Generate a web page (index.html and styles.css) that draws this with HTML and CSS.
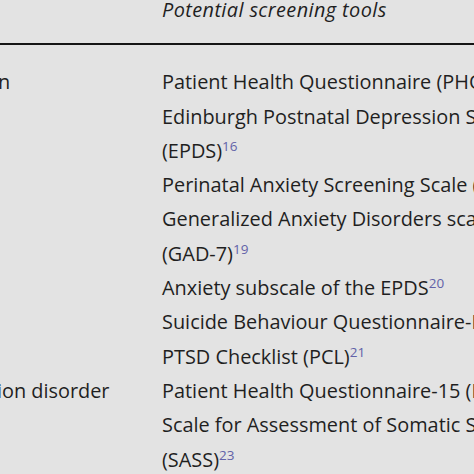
FILE: index.html
```html
<!DOCTYPE html>
<html lang="en">
<head>
<meta charset="utf-8">
<link rel="stylesheet" href="styles.css">
</head>
<body>
<div class="page">
  <table class="tools">
    <thead>
      <tr>
        <th class="cond"></th>
        <th class="tool">Potential screening tools</th>
      </tr>
    </thead>
    <tbody>
      <tr class="first">
        <td class="cond">Depression</td>
        <td class="tool">
          <p>Patient Health Questionnaire (PHQ-9)<sup>15</sup></p>
          <p>Edinburgh Postnatal Depression Scale<br>(EPDS)<sup>16</sup></p>
        </td>
      </tr>
      <tr>
        <td class="cond">Anxiety</td>
        <td class="tool">
          <p>Perinatal Anxiety Screening Scale (PASS)<sup>18</sup></p>
          <p>Generalized Anxiety Disorders scale<br>(GAD-7)<sup>19</sup></p>
          <p>Anxiety subscale of the EPDS<sup>20</sup></p>
        </td>
      </tr>
      <tr>
        <td class="cond">Suicide</td>
        <td class="tool"><p>Suicide Behaviour Questionnaire-Revised (SBQ-R)<sup>21</sup></p></td>
      </tr>
      <tr>
        <td class="cond">PTSD</td>
        <td class="tool"><p>PTSD Checklist (PCL)<sup>21</sup></p></td>
      </tr>
      <tr>
        <td class="cond">Somatization disorder</td>
        <td class="tool">
          <p>Patient Health Questionnaire-15 (PHQ-15)<sup>22</sup></p>
          <p>Scale for Assessment of Somatic Symptoms<br>(SASS)<sup>23</sup></p>
        </td>
      </tr>
    </tbody>
  </table>
</div>
</body>
</html>
```
FILE: styles.css
```css
html, body {
  margin: 0;
  padding: 0;
  background: #e3e3e3;
}
.page {
  width: 474px;
  height: 474px;
  overflow: hidden;
  background: #e3e3e3;
}
.tools {
  border-collapse: collapse;
  margin-top: -7px;
  margin-left: -95px;
  font-family: "Open Sans", "Noto Sans", sans-serif;
  font-size: 19.9px;
  line-height: 34.3px;
  color: #1f1f1f;
  table-layout: fixed;
  width: 900px;
}
.tools th, .tools td {
  padding: 0;
  text-align: left;
  vertical-align: top;
  font-weight: normal;
  white-space: nowrap;
}
.tools .cond {
  width: 257px;
}
.tools thead th {
  font-style: italic;
  letter-spacing: 0.4px;
  padding-bottom: 16px;
  border-bottom: 2px solid #151515;
}
.tools tbody tr.first td {
  padding-top: 20px;
}
.tools .tool p {
  margin: 0;
}
.tools sup {
  font-size: 13.5px;
  line-height: 0;
  color: #6262a8;
  vertical-align: 7px;
}
```
